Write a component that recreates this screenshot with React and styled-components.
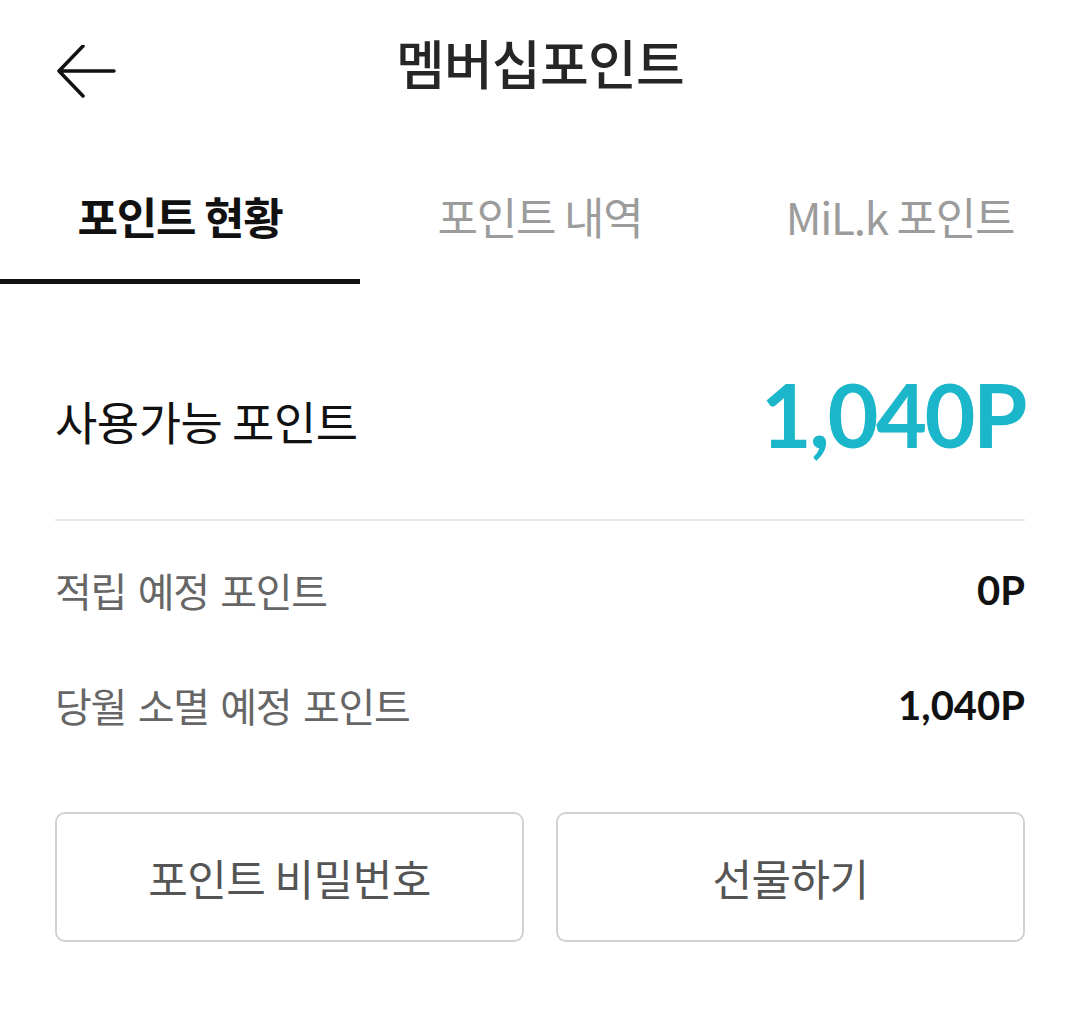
import React, { useState } from 'react';
import styled, { createGlobalStyle } from 'styled-components';

/* Global */
const GlobalStyle = createGlobalStyle`
   html, body {
      margin: 0;
      padding: 0;
      background: #fff;
   }
   body {
      font-family: "Noto Sans CJK KR", "Noto Sans", sans-serif;
      color: #111;
   }
`;

const KO = `"Noto Sans CJK KR", "Noto Sans", sans-serif`;
const NUM = `Lato, "Noto Sans", sans-serif`;

/* Header */
const Header = styled.header`
   display: grid;
   grid-template-columns: 1fr auto 1fr;
   align-items: center;
   height: 124px;
   padding: 0 56px;
`;

const BackButton = styled.button`
   display: flex;
   align-items: center;
   width: 60px;
   height: 60px;
   padding: 0;
   border: none;
   background: none;
   cursor: pointer;
   margin-top: 22px;
`;

const Title = styled.h1`
   margin: 0;
   font-family: ${KO};
   font-size: 53px;
   font-weight: 500;
   letter-spacing: -0.8px;
   color: #262626;
   line-height: 120px;
`;

/* Tabs */
const TabBar = styled.nav`
   display: grid;
   grid-template-columns: repeat(3, 1fr);
`;

const Tab = styled.button`
   padding: 62px 0 33px;
   border: none;
   border-bottom: 5px solid ${({ $active }) => ($active ? '#111' : 'transparent')};
   background: none;
   font-family: ${KO};
   font-size: 44px;
   line-height: 60px;
   letter-spacing: -1.2px;
   font-weight: ${({ $active }) => ($active ? 700 : 400)};
   color: ${({ $active }) => ($active ? '#111' : '#9c9c9c')};
   cursor: pointer;
`;

/* Content */
const Content = styled.main`
   padding: 0 55px;
`;

const Summary = styled.section`
   display: flex;
   justify-content: space-between;
   align-items: center;
   height: 72px;
   padding: 100px 0 63px;
   border-bottom: 2px solid #e8e8e8;
`;

const SummaryLabel = styled.span`
   font-family: ${KO};
   font-size: 46px;
   letter-spacing: -0.5px;
   color: #111;
`;

const SummaryValue = styled.span`
   font-family: ${NUM};
   font-size: 88px;
   font-weight: 700;
   letter-spacing: -2.5px;
   color: #1bb6c9;
   line-height: 72px;
   margin-top: -12px;
`;

const Details = styled.dl`
   display: flex;
   flex-direction: column;
   gap: 65px;
   margin: 44px 0 0;
`;

const DetailRow = styled.div`
   display: flex;
   justify-content: space-between;
   align-items: center;
   height: 50px;
`;

const DetailLabel = styled.dt`
   font-family: ${KO};
   font-size: 40px;
   letter-spacing: -1.3px;
   word-spacing: 4px;
   color: #666;
`;

const DetailValue = styled.dd`
   margin: 0;
   font-family: ${NUM};
   font-size: 40px;
   font-weight: 700;
   letter-spacing: 0;
   color: #111;
`;

const Actions = styled.div`
   display: grid;
   grid-template-columns: 1fr 1fr;
   gap: 32px;
   margin-top: 82px;
`;

const ActionButton = styled.button`
   height: 130px;
   border: 2px solid #d2d2d2;
   border-radius: 10px;
   background: #fff;
   font-family: ${KO};
   font-size: 43px;
   letter-spacing: -0.5px;
   color: #555;
   cursor: pointer;
`;

const BackIcon = () => (
   <svg width="60" height="56" viewBox="0 0 60 56" fill="none">
      <path
         d="M3 26 H58 M27 1 L3 26 L27 51"
         stroke="#111"
         strokeWidth="3.5"
         strokeLinecap="round"
         strokeLinejoin="round"
      />
   </svg>
);

const TABS = ['포인트 현황', '포인트 내역', 'MiL.k 포인트'];

const DETAILS = [
   { label: '적립 예정 포인트', value: '0P' },
   { label: '당월 소멸 예정 포인트', value: '1,040P' },
];

export default function App() {
   const [tab, setTab] = useState(0);

   return (
      <>
         <GlobalStyle />
         <Header>
            <BackButton aria-label="뒤로">
               <BackIcon />
            </BackButton>
            <Title>멤버십포인트</Title>
            <span />
         </Header>
         <TabBar>
            {TABS.map((name, i) => (
               <Tab key={name} $active={tab === i} onClick={() => setTab(i)}>
                  {name}
               </Tab>
            ))}
         </TabBar>
         <Content>
            <Summary>
               <SummaryLabel>사용가능 포인트</SummaryLabel>
               <SummaryValue>1,040P</SummaryValue>
            </Summary>
            <Details>
               {DETAILS.map((d) => (
                  <DetailRow key={d.label}>
                     <DetailLabel>{d.label}</DetailLabel>
                     <DetailValue>{d.value}</DetailValue>
                  </DetailRow>
               ))}
            </Details>
            <Actions>
               <ActionButton>포인트 비밀번호</ActionButton>
               <ActionButton>선물하기</ActionButton>
            </Actions>
         </Content>
      </>
   );
}
